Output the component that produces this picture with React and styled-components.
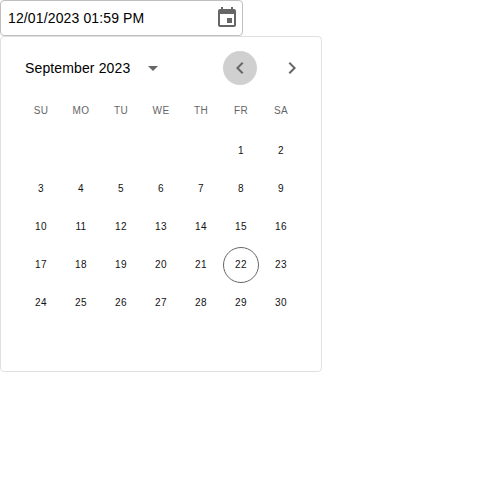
import React from "react";
import styled, { createGlobalStyle } from "styled-components";

const GlobalStyle = createGlobalStyle`
  *, *::before, *::after { box-sizing: border-box; }
  body {
    margin: 0;
    background: #fff;
    color: rgba(0, 0, 0, 0.87);
    font-family: "Liberation Sans", Arial, sans-serif;
  }
  button { font: inherit; color: inherit; background: none; border: 0; padding: 0; }
`;

const Picker = styled.div`
  display: flex;
  flex-direction: column;
  align-items: flex-start;
`;

const Field = styled.div`
  display: flex;
  align-items: center;
  justify-content: space-between;
  width: 243px;
  height: 36px;
  padding: 0 3px 0 7px;
  border: 1px solid #bfbfbf;
  border-radius: 4px;
`;

const FieldValue = styled.span`
  font-size: 14px;
  line-height: 20px;
  letter-spacing: 0.131px;
  color: #000;
`;

const Icon = styled.svg`
  display: block;
  width: 24px;
  height: 24px;
  fill: #666;
`;

const Calendar = styled.section`
  width: 322px;
  height: 336px;
  border: 1px solid #e0e0e0;
  border-radius: 4px;
`;

const Header = styled.header`
  display: flex;
  align-items: center;
  justify-content: space-between;
  height: 30px;
  margin: 16px 0 8px;
  padding: 0 12px 0 24px;
`;

const MonthLabel = styled.button`
  display: flex;
  align-items: center;
  gap: 11px;
  font-size: 14px;
  line-height: 20px;
  letter-spacing: 0.131px;
  color: #000;
`;

const Arrows = styled.nav`
  display: flex;
  gap: 18px;
`;

const ArrowButton = styled.button`
  padding: 5px;
  border-radius: 50%;
  background: ${({ $active }) => ($active ? "#d0d0d0" : "transparent")};
`;

const Week = styled.div`
  display: grid;
  grid-template-columns: repeat(7, 36px);
  column-gap: 4px;
  justify-content: center;
`;

const Weekday = styled.span`
  height: 40px;
  line-height: 40px;
  text-align: center;
  font-size: 10px;
  letter-spacing: 0.333px;
  color: #666;
`;

const Days = styled.div`
  display: grid;
  row-gap: 2px;
  margin-top: 2px;
`;

const Day = styled.button`
  display: flex;
  align-items: center;
  justify-content: center;
  width: 36px;
  height: 36px;
  padding-bottom: 1px;
  font-size: 10px;
  letter-spacing: 0.333px;
  color: #111;
  border-radius: 50%;
  border: 1px solid ${({ $today }) => ($today ? "#666" : "transparent")};
`;

const weekdays = ["SU", "MO", "TU", "WE", "TH", "FR", "SA"];
const firstWeekday = 5;
const today = 22;
const weeks = Array.from({ length: 5 }, (_, w) =>
  Array.from({ length: 7 }, (_, d) => w * 7 + d - firstWeekday + 1)
);

export default function App() {
  return (
    <>
      <GlobalStyle />
      <Picker>
        <Field>
          <FieldValue>12/01/2023 01:59 PM</FieldValue>
          <Icon viewBox="0 0 24 24">
            <path d="M17 12h-5v5h5v-5zM16 1v2H8V1H6v2H5c-1.11 0-1.99.9-1.99 2L3 19c0 1.1.89 2 2 2h14c1.1 0 2-.9 2-2V5c0-1.1-.9-2-2-2h-1V1h-2zm3 18H5V8h14v11z" />
          </Icon>
        </Field>
        <Calendar>
          <Header>
            <MonthLabel>
              September 2023
              <Icon viewBox="0 0 24 24">
                <path d="M7 10l5 5 5-5z" />
              </Icon>
            </MonthLabel>
            <Arrows>
              <ArrowButton $active aria-label="Previous month">
                <Icon viewBox="0 0 24 24">
                  <path d="M15.41 7.41L14 6l-6 6 6 6 1.41-1.41L10.83 12z" />
                </Icon>
              </ArrowButton>
              <ArrowButton aria-label="Next month">
                <Icon viewBox="0 0 24 24">
                  <path d="M10 6L8.59 7.41 13.17 12l-4.58 4.59L10 18l6-6z" />
                </Icon>
              </ArrowButton>
            </Arrows>
          </Header>
          <Week>
            {weekdays.map((name) => (
              <Weekday key={name}>{name}</Weekday>
            ))}
          </Week>
          <Days>
            {weeks.map((week) => (
              <Week key={week[0]}>
                {week.map((day) =>
                  day > 0 ? (
                    <Day key={day} $today={day === today}>
                      {day}
                    </Day>
                  ) : (
                    <span key={day} />
                  )
                )}
              </Week>
            ))}
          </Days>
        </Calendar>
      </Picker>
    </>
  );
}
